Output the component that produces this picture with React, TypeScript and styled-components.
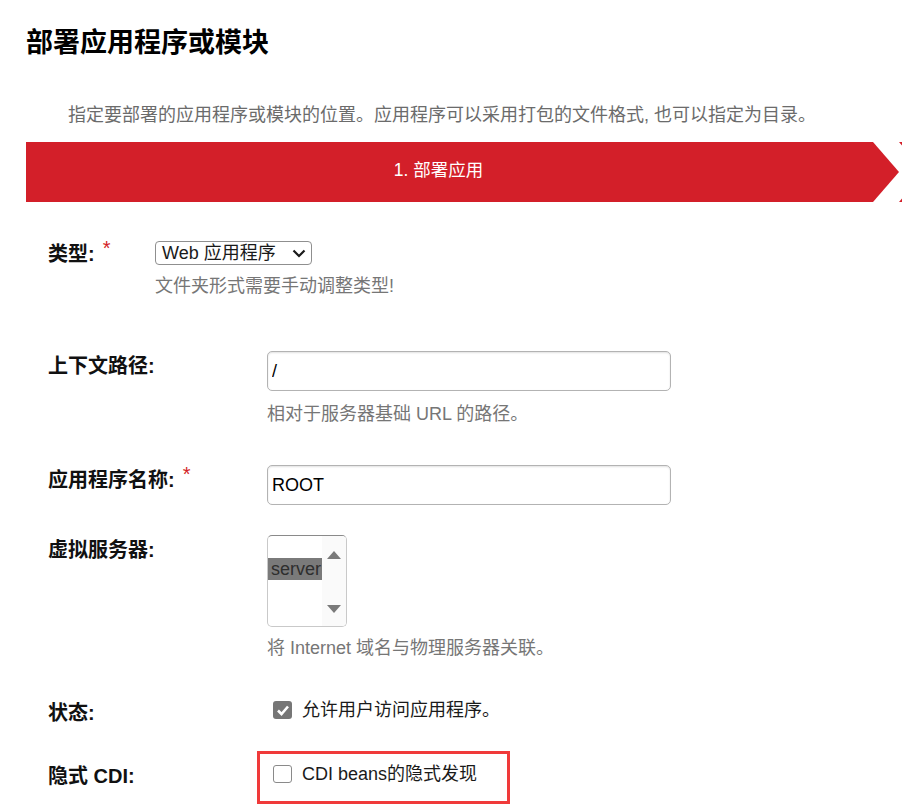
import React from "react";
import styled, { createGlobalStyle } from "styled-components";

const GlobalStyle = createGlobalStyle`
  html, body {
    margin: 0;
    padding: 0;
    background: #ffffff;
  }
  body {
    font-family: "Liberation Sans", "Noto Sans CJK SC", sans-serif;
    color: #111;
    overflow: hidden;
  }
  * { box-sizing: border-box; }
`;

const RED = "#d31f29";

const Page = styled.div`
  width: 902px;
  padding: 27px 0 0 26px;
  overflow: hidden;
`;

const Title = styled.h1`
  margin: 0;
  font-size: 27px;
  line-height: 32px;
  font-weight: 700;
  color: #000;
`;

const Description = styled.p`
  margin: 44px 0 0 0;
  padding-left: 42px;
  font-size: 18px;
  line-height: 24px;
  color: #6b6b6b;
`;

const StepBar = styled.div`
  display: flex;
  margin-top: 15px;
  height: 60px;
  overflow: hidden;
`;

const Step = styled.div<{ $first?: boolean }>`
  flex: none;
  height: 60px;
  background: ${RED};
  color: #fff;
  display: flex;
  align-items: center;
  justify-content: center;
  font-size: 17.5px;
  line-height: 22px;
  width: ${(p) => (p.$first ? "873px" : "200px")};
  padding: ${(p) => (p.$first ? "0 48px 4px 0" : "0")};
  clip-path: ${(p) =>
    p.$first
      ? "polygon(0 0, calc(100% - 26px) 0, 100% 50%, calc(100% - 26px) 100%, 0 100%)"
      : "polygon(0 0, 100% 0, 100% 100%, 0 100%, 26px 50%)"};
`;

const Form = styled.div`
  padding-left: 22px;
  display: flex;
  flex-direction: column;
`;

const Row = styled.div<{ $mt: number; $labelCol: number }>`
  display: grid;
  grid-template-columns: ${(p) => p.$labelCol}px 1fr;
  margin-top: ${(p) => p.$mt}px;
  align-items: start;
`;

const Label = styled.div<{ $pt: number }>`
  padding-top: ${(p) => p.$pt}px;
  font-size: 20px;
  line-height: 24px;
  font-weight: 700;
  color: #111;
  white-space: nowrap;
`;

const Required = styled.span`
  display: inline-block;
  margin-left: 8px;
  color: ${RED};
  font-size: 20px;
  font-weight: 400;
  line-height: 20px;
  transform: translateY(-6px);
`;

const Field = styled.div`
  display: flex;
  flex-direction: column;
  align-items: flex-start;
`;

const Help = styled.div<{ $mt: number }>`
  margin-top: ${(p) => p.$mt}px;
  font-size: 18px;
  line-height: 22px;
  color: #767676;
`;

const SelectBox = styled.div`
  width: 157px;
  height: 24px;
  border: 1px solid #8f8f8f;
  border-radius: 4px;
  display: flex;
  align-items: center;
  justify-content: space-between;
  padding: 0 5px 0 6px;
  font-size: 18px;
  line-height: 22px;
  color: #1a1a1a;
  background: #fff;
`;

const TextInput = styled.input`
  width: 404px;
  height: 40px;
  border: 1px solid #b3b3b3;
  border-radius: 5px;
  box-shadow: inset 0 1px 2px rgba(0, 0, 0, 0.12);
  padding: 0 4px;
  font-family: "Liberation Sans", "Noto Sans CJK SC", sans-serif;
  font-size: 18px;
  color: #000;
  background: #fff;
  outline: none;
`;

const ListBox = styled.div`
  width: 80px;
  height: 92px;
  border: 1px solid #c9c9c9;
  border-top-color: #8a8a8a;
  border-radius: 5px;
  display: flex;
  overflow: hidden;
  background: #fff;
`;

const ListItems = styled.div`
  flex: 1;
  padding-top: 22px;
`;

const ListItem = styled.div<{ $selected?: boolean }>`
  height: 22px;
  font-size: 18px;
  line-height: 22px;
  padding-left: 3px;
  color: #2e2e2e;
  background: ${(p) => (p.$selected ? "#7a7a7a" : "transparent")};
`;

const ScrollTrack = styled.div`
  width: 24px;
  background: #fafafa;
  display: flex;
  flex-direction: column;
  justify-content: space-between;
  align-items: center;
  padding: 15px 0 13px;
`;

const CheckRow = styled.label`
  display: flex;
  align-items: center;
  gap: 10px;
  font-size: 18px;
  line-height: 22px;
  color: #1a1a1a;
`;

const CheckPlain = styled.div`
  padding-left: 6px;
`;

const Highlight = styled.div`
  margin-left: -10px;
  width: 253px;
  border: 3px solid #f03a3a;
  padding: 9px 0 16px 13px;
`;

const Box = styled.span<{ $checked?: boolean }>`
  width: 19px;
  height: 18px;
  border-radius: 3px;
  display: inline-flex;
  align-items: center;
  justify-content: center;
  background: ${(p) => (p.$checked ? "#767676" : "#fff")};
  border: ${(p) => (p.$checked ? "none" : "1.5px solid #8a8a8a")};
  flex: none;
`;

const Chevron = () => (
  <svg width="14" height="9" viewBox="0 0 14 9">
    <polyline points="1.5,1.5 7,7 12.5,1.5" fill="none" stroke="#1a1a1a" strokeWidth="2.2" />
  </svg>
);

const Tri = ({ up }: { up?: boolean }) => (
  <svg width="14" height="8" viewBox="0 0 14 8">
    <polygon points={up ? "7,0 14,8 0,8" : "0,0 14,0 7,8"} fill="#7a7a7a" />
  </svg>
);

const Check = () => (
  <svg width="14" height="12" viewBox="0 0 14 12">
    <polyline points="2,6.5 5.5,10 12,2.5" fill="none" stroke="#fff" strokeWidth="2.6" />
  </svg>
);

export default function App() {
  return (
    <>
      <GlobalStyle />
      <Page>
        <Title>部署应用程序或模块</Title>
        <Description>
          指定要部署的应用程序或模块的位置。应用程序可以采用打包的文件格式, 也可以指定为目录。
        </Description>
        <StepBar>
          <Step $first>1. 部署应用</Step>
          <Step />
        </StepBar>
        <Form>
          <Row $mt={39} $labelCol={107}>
            <Label $pt={1}>
              类型:<Required>*</Required>
            </Label>
            <Field>
              <SelectBox>
                <span>Web 应用程序</span>
                <Chevron />
              </SelectBox>
              <Help $mt={10}>文件夹形式需要手动调整类型!</Help>
            </Field>
          </Row>

          <Row $mt={54} $labelCol={219}>
            <Label $pt={3}>上下文路径:</Label>
            <Field>
              <TextInput defaultValue="/" />
              <Help $mt={12}>相对于服务器基础 URL 的路径。</Help>
            </Field>
          </Row>

          <Row $mt={40} $labelCol={219}>
            <Label $pt={3}>
              应用程序名称:<Required>*</Required>
            </Label>
            <Field>
              <TextInput defaultValue="ROOT" />
            </Field>
          </Row>

          <Row $mt={30} $labelCol={219}>
            <Label $pt={3}>虚拟服务器:</Label>
            <Field>
              <ListBox>
                <ListItems>
                  <ListItem $selected>server</ListItem>
                </ListItems>
                <ScrollTrack>
                  <Tri up />
                  <Tri />
                </ScrollTrack>
              </ListBox>
              <Help $mt={10}>将 Internet 域名与物理服务器关联。</Help>
            </Field>
          </Row>

          <Row $mt={40} $labelCol={219}>
            <Label $pt={2}>状态:</Label>
            <CheckPlain>
              <CheckRow>
                <Box $checked>
                  <Check />
                </Box>
                允许用户访问应用程序。
              </CheckRow>
            </CheckPlain>
          </Row>

          <Row $mt={26} $labelCol={219}>
            <Label $pt={13}>隐式 CDI:</Label>
            <Field>
              <Highlight>
                <CheckRow>
                  <Box />
                  CDI beans的隐式发现
                </CheckRow>
              </Highlight>
            </Field>
          </Row>
        </Form>
      </Page>
    </>
  );
}
